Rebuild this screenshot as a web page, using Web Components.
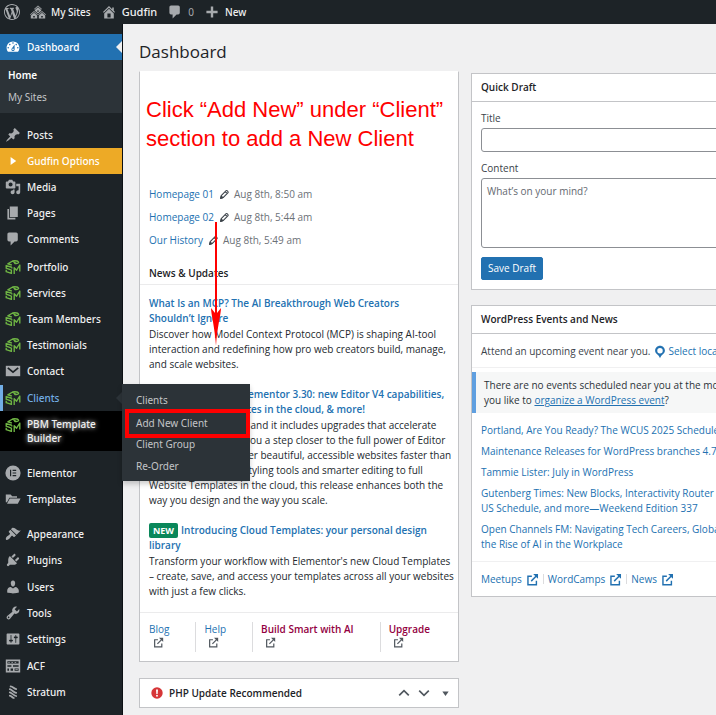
<!DOCTYPE html>
<html lang="en">
<head>
<meta charset="utf-8">
<title>Dashboard</title>
<style>
html,body{margin:0;height:100%}
body{background:#f0f0f1;font:10px/15px "Open Sans","Noto Sans",sans-serif;color:#3c434a;overflow:hidden}
</style>
</head>
<body>
<admin-app></admin-app>
<script>
const P = d => `<path d="${d}"/>`;
const ICONS = {
 wordpress: P("M20 10c0-5.51-4.49-10-10-10C4.48 0 0 4.49 0 10c0 5.52 4.48 10 10 10 5.51 0 10-4.48 10-10zM7.78 15.37L4.37 6.22c.55-.02 1.17-.08 1.17-.08.5-.06.44-1.13-.06-1.11 0 0-1.45.11-2.37.11-.18 0-.37 0-.58-.01C4.12 2.69 6.87 1.11 10 1.11c2.33 0 4.45.87 6.05 2.34-.68-.11-1.65.39-1.65 1.58 0 .74.45 1.36.9 2.1.35.61.55 1.36.55 2.46 0 1.49-1.4 5-1.4 5l-3.03-8.37c.54-.02.82-.17.82-.17.5-.05.44-1.25-.06-1.22 0 0-1.44.12-2.38.12-.87 0-2.33-.12-2.33-.12-.5-.03-.56 1.2-.06 1.22l.92.08 1.26 3.41zM17.41 10c.24-.64.74-1.87.43-4.25.7 1.29 1.05 2.71 1.05 4.25 0 3.29-1.73 6.24-4.4 7.78.97-2.59 1.94-5.2 2.92-7.78zM6.1 18.09C3.12 16.65 1.11 13.53 1.11 10c0-1.3.23-2.48.72-3.59C3.25 10.3 4.67 14.2 6.1 18.09zm4.03-6.63l2.58 6.98c-.86.29-1.76.45-2.71.45-.79 0-1.57-.11-2.29-.33.81-2.38 1.62-4.74 2.42-7.1z"),
 sites: P("M14.27 6.87L10 3.14 5.73 6.87 5 6.14l5-4.38 5 4.38zM14 8.42l-4.05 3.43L6 8.38v-.74l4-3.5 4 3.5v.78zM11 9.7V8H9v1.7h2zm-1.73 4.03L5 10 .73 13.73 0 13l5-4.38L10 13zm10 0L15 10l-4.27 3.73L10 13l5-4.38L20 13zM5 11l4 3.5V18H1v-3.5zm10 0l4 3.5V18h-8v-3.5zm-9 6v-2H4v2h2zm10 0v-2h-2v2h2z"),
 home: P("M16 8.5l1.53 1.53-1.06 1.06L10 4.6l-6.47 6.49-1.06-1.06L10 2.5l4 4v-2h2v4zm-6-2.46l6 5.99V18H4v-5.97zM12 17v-5H8v5h4z"),
 comment: P("M5 2h9c1.1 0 2 .9 2 2v7c0 1.1-.9 2-2 2h-2l-5 5v-5H5c-1.1 0-2-.9-2-2V4c0-1.1.9-2 2-2z"),
 plus: P("M17 8.5v3h-5.500v5.500h-3v-5.500H3v-3h5.500V3h3v5.500z"),
 dashboard: P("M3.76 16h12.48c1.1-1.37 1.76-3.11 1.76-5 0-4.42-3.58-8-8-8s-8 3.58-8 8c0 1.89.66 3.63 1.76 5zM10 4c.55 0 1 .45 1 1s-.45 1-1 1-1-.45-1-1 .45-1 1-1zM6 6c.55 0 1 .45 1 1s-.45 1-1 1-1-.45-1-1 .45-1 1-1zm8 0c.55 0 1 .45 1 1s-.45 1-1 1-1-.45-1-1 .45-1 1-1zm-5.370 5.550L12 7v6c0 1.100-.9 2-2 2s-2-.9-2-2c0-.57.24-1.080.63-1.450zM4 10c.55 0 1 .45 1 1s-.45 1-1 1-1-.45-1-1 .45-1 1-1zm12 0c.55 0 1 .45 1 1s-.45 1-1 1-1-.45-1-1 .45-1 1-1zm-5 3c0-.55-.45-1-1-1s-1 .45-1 1 .45 1 1 1 1-.45 1-1z"),
 pin: P("M10.44 3.02l1.82-1.82 6.36 6.35-1.83 1.82c-1.05-.68-2.48-.57-3.41.36l-.75.75c-.92.93-1.04 2.35-.35 3.41l-1.83 1.82-2.41-2.41-2.8 2.79c-.42.42-3.38 2.71-3.8 2.29s1.86-3.39 2.28-3.81l2.79-2.79L4.1 9.36l1.83-1.82c1.05.69 2.48.57 3.4-.36l.75-.75c.93-.92 1.05-2.35.36-3.41z"),
 play: P("M7 5l7 5-7 5z"),
 media: P("M13 11V4c0-.55-.45-1-1-1h-1.67L9 1H5L3.67 3H2c-.55 0-1 .45-1 1v7c0 .55.45 1 1 1h10c.55 0 1-.45 1-1zM7 4.500c1.380 0 2.500 1.120 2.500 2.500S8.380 9.500 7 9.500 4.500 8.380 4.500 7 5.620 4.500 7 4.500zM14 6h5v10.500c0 1.380-1.120 2.500-2.500 2.500S14 17.880 14 16.500s1.120-2.500 2.500-2.500c.17 0 .34.02.5.05V9h-3V6zm-4 8.050V13h2v3.500c0 1.380-1.120 2.500-2.500 2.500S7 17.880 7 16.500 8.120 14 9.500 14c.17 0 .34.02.5.05z"),
 page: P("M6 15V2h10v13H6zm-1 1h8v2H3V5h2v11z"),
 sbm: `<g fill="none" stroke="#6fb544" stroke-width="1.700" stroke-linejoin="round"><path d="M8.500 7.500L3.500 6l6-3.500c3.500-.8 8 .2 7.500 2-.5 1.200-3 1.300-5.500.9M9.500 2.500l4 3"/><path d="M8.500 10.300L1.500 8.200v3.300l6.500 2.300v4.200L1.500 15.800v-2.300M8.500 10.300v1.700"/><path d="M11.500 18.800v-8l3 3.200 4-6.500v8"/></g>`,
 mail: `<path d="M1 3.500h18v13H1z"/><path d="M3.500 6L10 11.500 16.500 6" fill="none" stroke="#1d2327" stroke-width="2.200"/>`,
 elementor: `<circle cx="10" cy="10" r="9.500"/><path d="M7 6v8M9.500 6.700H14M9.500 10H14M9.500 13.300H14" stroke="#1d2327" stroke-width="1.500"/>`,
 folder: P("M1 4.500h6l2 2h6v2H5.500L2.500 14H1zM6 9.500h13.500l-3.500 6.500H2.500z"),
 appearance: P("M14.48 11.06L7.41 3.99l1.5-1.5c.5-.56 2.3-.47 3.51.32 1.21.8 1.43 1.28 2.91 2.1 1.18.64 2.45 1.26 4.45.85zm-.71.71L6.7 4.7 4.93 6.47c-.39.39-.39 1.02 0 1.41l1.06 1.06c.39.39.39 1.03 0 1.42-.6.6-1.43 1.11-2.21 1.69-.35.26-.7.53-1.01.84C1.43 14.23.4 16.08 1.4 17.07c.99 1 2.84-.03 4.18-1.36.31-.31.58-.66.85-1.02.57-.78 1.08-1.61 1.69-2.21.39-.39 1.02-.39 1.41 0l1.06 1.06c.39.39 1.02.39 1.41 0z"),
 plugin: P("M13.11 4.36L9.87 7.6 8 5.73l3.24-3.24c.35-.34 1.05-.2 1.56.32.52.51.66 1.21.31 1.55zm-8 1.77l.91-1.12 9.01 9.01-1.19.84c-.71.71-2.63 1.16-3.82 1.16H6.14L4.9 17.26c-.59.59-1.54.59-2.12 0-.59-.58-.59-1.53 0-2.12l1.24-1.24v-3.88c0-1.13.4-3.19 1.09-3.89zm7.26 3.97l3.24-3.24c.34-.35 1.04-.21 1.55.31.52.51.66 1.21.31 1.55l-3.24 3.25z"),
 user: P("M10 9.25c-2.27 0-2.73-3.44-2.73-3.44C7 4.02 7.82 2 9.97 2c2.16 0 2.98 2.02 2.71 3.81 0 0-.41 3.44-2.68 3.44zm0 2.57L12.72 10c2.39 0 4.52 2.33 4.52 4.53v2.49s-3.65 1.13-7.24 1.13c-3.65 0-7.24-1.13-7.24-1.13v-2.49c0-2.25 1.94-4.48 4.47-4.48z"),
 tool: P("M16.68 9.77c-1.34 1.34-3.3 1.67-4.95.99l-5.41 6.52c-.99.99-2.59.99-3.58 0s-.99-2.59 0-3.57l6.52-5.42c-.68-1.65-.35-3.61.99-4.95 1.28-1.28 3.12-1.62 4.72-1.06l-2.89 2.89 2.82 2.82 2.86-2.87c.53 1.58.18 3.39-1.08 4.65zM3.81 16.21c.4.39 1.04.39 1.43 0 .4-.4.4-1.04 0-1.43-.39-.4-1.03-.4-1.43 0-.39.39-.39 1.03 0 1.43z"),
 settings: P("M18 16V4c0-.55-.45-1-1-1H3c-.55 0-1 .45-1 1v12c0 .55.45 1 1 1h14c.55 0 1-.45 1-1zM8 11h1c.55 0 1 .45 1 1s-.45 1-1 1H8v1.500c0 .28-.22.5-.5.5s-.5-.22-.5-.5V13H6c-.55 0-1-.45-1-1s.45-1 1-1h1V5.500c0-.28.22-.5.5-.5s.5.22.5.5V11zm5-2h-1c-.55 0-1-.45-1-1s.45-1 1-1h1V5.500c0-.28.22-.5.5-.5s.5.22.5.5V7h1c.55 0 1 .45 1 1s-.45 1-1 1h-1v5.500c0 .28-.22.5-.5.5s-.5-.22-.5-.5V9z"),
 acf: `<path fill-rule="evenodd" d="M1 2h18v16H1zM3 4v3h14V4zM3 9v2h5V9zM10 9v2h7V9zM3 13v3h2v-3zM7 13v3h3v-3zM12 13v3h5v-3z"/><path d="M4 5h2v1H4zM8 5h2v1H8zM12 5h2v1h-2zM13 14h3v1h-3z"/>`,
 stratum: `<path d="M7 3c3 0 4 3 7 3.500M6 6.500c3 1 5 4 8 4.500M6 10.500c3 1 5 4 8 4.500M6 14.500c2 .5 3 2.500 5 3" fill="none" stroke="currentColor" stroke-width="2.200" stroke-linecap="round"/>`,
 pencil: `<g fill="none" stroke="currentColor" stroke-width="2" stroke-linejoin="round"><path d="M3 17l1-5 9-9c1.500-1 4.500 2 3.500 3.500l-9 9zM11.500 5l3.500 3.500"/><path d="M3 17l1.300-4 2.700 2.800z" fill="currentColor"/></g>`,
 external: `<g fill="none" stroke="currentColor" stroke-width="2.200"><path d="M9 5H3v13h13v-6"/><path d="M8 12.500l9-9"/></g><path d="M11 1.500h7.500V9l-2.500-2.500-3-3z"/>`,
 location: `<path fill-rule="evenodd" d="M10 1C6 1 3 4.200 3 8c0 2.500 1.400 4 2.800 5.200C7.500 14.600 9.500 17 10 19c.5-2 2.500-4.400 4.200-5.800C15.600 12 17 10.500 17 8c0-3.800-3-7-7-7zm0 3.200a3.900 3.900 0 1 1 0 7.800 3.900 3.900 0 0 1 0-7.800z"/>`,
 alert: `<circle cx="10" cy="10" r="9.500" fill="#d63638"/><path d="M8.400 4h3.200l-.5 7.500H8.900z" fill="#fff"/><circle cx="10" cy="14.500" r="1.600" fill="#fff"/>`,
 up: `<path d="M2 14l8-8 8 8" fill="none" stroke="currentColor" stroke-width="2.800"/>`,
 down: `<path d="M2 6l8 8 8-8" fill="none" stroke="currentColor" stroke-width="2.800"/>`,
 toggle: P("M1 4h18l-9 13z")
};
const define = (name, css, html) => customElements.define(name, class extends HTMLElement {
  constructor(){
    super();
    this.attachShadow({mode:'open'}).innerHTML = `<style>*{box-sizing:border-box}a{text-decoration:none;color:inherit}${css}</style>` + (typeof html === 'function' ? html(this) : html);
  }
});
const attr = (el, n) => el.getAttribute(n) || '';

define('wp-icon', `:host{display:inline-block;flex:none;width:16px;height:16px}svg{display:block;width:100%;height:100%}`,
  el => `<svg viewBox="0 0 20 20" fill="currentColor" aria-hidden="true">${ICONS[attr(el,'name')]}</svg>`);

define('admin-bar', `
:host{display:block;background:#1d2327;color:#f0f0f1;font:500 10px/24px "Noto Sans","Open Sans",sans-serif}
nav{display:flex;height:24px;padding-left:4px;gap:10px}
a{display:flex;align-items:center;gap:5px}
.site{font-size:11px}
.count{color:#a7aaad;font-weight:400}
wp-icon{color:#a7aaad}`,
`<nav aria-label="Toolbar">
<a href="#" aria-label="About WordPress"><wp-icon name="wordpress"></wp-icon></a>
<a href="#"><wp-icon name="sites"></wp-icon>My Sites</a>
<a href="#" class="site"><wp-icon name="home"></wp-icon>Gudfin</a>
<a href="#" class="count"><wp-icon name="comment"></wp-icon>0</a>
<a href="#"><wp-icon name="plus"></wp-icon>New</a>
</nav>`);

define('nav-item', `
:host{display:block;position:relative;color:#f0f0f1;font-weight:500}
a{display:flex;align-items:center;min-height:26px;padding-left:5px;gap:6px;color:inherit}
wp-icon{color:#a7aaad}
:host([state=current]){background:#2271b1;color:#fff}
:host([state=promo]){background:#edaa26;color:#fff}
:host([state=current]) wp-icon,:host([state=promo]) wp-icon{color:#fff}
:host([state=open]){color:#72aee6;box-shadow:inset 3px 0 #72aee6}
:host([state=boxed]){background:#000}
:host([state=boxed]) a{align-items:flex-start;padding-top:6px;padding-bottom:6px;line-height:14px;text-shadow:0 0 5px #fff}
:host([state=current])::after,:host([state=open])::after{content:"";position:absolute;right:0;top:50%;margin-top:-6px;border:6px solid transparent;border-left:0;border-right-color:#f0f0f1}
:host([state=open])::after{border-right-color:#2c3338}`,
el => `<a href="#"><wp-icon name="${attr(el,'icon')}"></wp-icon><span><slot></slot></span></a><slot name="flyout"></slot>`);

define('fly-out', `
:host{position:absolute;left:100%;top:-1px;z-index:5;width:128px;padding:5px 0 4px;background:#2c3338;color:#c3c4c7;box-shadow:0 3px 5px rgba(0,0,0,.2);font-weight:400}
a{display:block;padding:0 14px;line-height:22px}
a.marked{margin:-2px 0 -5px 3px;padding:0 7px;border:4px solid #f00;line-height:21px}`,
`<a href="#">Clients</a><a href="#" class="marked">Add New Client</a><a href="#">Client Group</a><a href="#">Re-Order</a>`);

define('side-nav', `
:host{display:block;width:123px;padding-top:10px;background:#1d2327;font:10px/15px "Noto Sans","Open Sans",sans-serif;position:relative;z-index:4;border-right:1px solid #0c1014}
.sub{background:#2c3338;padding:4px 8px 5px;margin-bottom:9px;color:#c3c4c7}
.sub a{display:block;line-height:22px}.sub .on{color:#fff;font-weight:600}
.group{margin-bottom:1px}.first{margin-bottom:2px}.wide{margin-bottom:9px}`,
`<nav aria-label="Main menu">
<nav-item icon="dashboard" state="current">Dashboard</nav-item>
<div class="sub"><a href="#" class="on">Home</a><a href="#">My Sites</a></div>
<div class="first"><nav-item icon="pin">Posts</nav-item><nav-item icon="play" state="promo">Gudfin Options</nav-item><nav-item icon="media">Media</nav-item><nav-item icon="page">Pages</nav-item><nav-item icon="comment">Comments</nav-item></div>
<div class="group"><nav-item icon="sbm">Portfolio</nav-item><nav-item icon="sbm">Services</nav-item><nav-item icon="sbm">Team Members</nav-item><nav-item icon="sbm">Testimonials</nav-item><nav-item icon="mail">Contact</nav-item></div>
<div class="wide"><nav-item icon="sbm" state="open">Clients<fly-out slot="flyout"></fly-out></nav-item><nav-item icon="sbm" state="boxed">PBM Template Builder</nav-item></div>
<div class="wide"><nav-item icon="elementor">Elementor</nav-item><nav-item icon="folder">Templates</nav-item></div>
<div class="group"><nav-item icon="appearance">Appearance</nav-item><nav-item icon="plugin">Plugins</nav-item></div>
<div class="group"><nav-item icon="user">Users</nav-item><nav-item icon="tool">Tools</nav-item><nav-item icon="settings">Settings</nav-item></div>
<nav-item icon="acf">ACF</nav-item><nav-item icon="stratum">Stratum</nav-item>
</nav>`);

define('dash-card', `
:host{display:block;background:#fff;border:1px solid #c3c4c7}
h2{display:flex;align-items:center;margin:0;padding:0 9px;height:28px;font-size:10px;font-weight:600;color:#1d2327;border-bottom:1px solid #c3c4c7}`,
el => `<h2>${attr(el,'heading')}</h2><slot></slot>`);

define('activity-row', `
:host{display:flex;align-items:center;height:23px;color:#6c7177}
a{color:#2271b1}wp-icon{width:11px;height:11px;margin:0 4px 0 5px;color:#3c434a}`,
el => `<a href="#">${attr(el,'label')}</a><wp-icon name="pencil"></wp-icon><span><slot></slot></span>`);

define('news-post', `
:host{display:block;margin-bottom:15px;white-space:nowrap}
:host(:last-child){margin-bottom:13px}
a{display:block;margin-bottom:1px;color:#2271b1;font-weight:600}
p{margin:0;color:#23282d}
.new{display:inline-block;background:#0a875a;color:#fff;border-radius:2px;padding:0 4px;margin-right:3px;font-size:9px;font-weight:700;line-height:15px;vertical-align:top}`,
el => `<a href="#">${el.hasAttribute('new')?'<span class="new">NEW</span>':''}<slot name="title"></slot></a><p><slot></slot></p>`);

define('overview-card', `
:host{display:block;position:relative;background:#fff;border:1px solid #c3c4c7;border-top-color:#fff}
.note{margin:0;padding:23px 6px 30px;font:22px/29px "Liberation Sans",Arial,sans-serif;color:#f00}
.rows{padding:0 9px}
h3{margin:10px 0 11px;padding:0 9px;font-size:10px;line-height:22px;font-weight:600;color:#1d2327;border-bottom:1px solid #ebebec}
.posts{padding:0 9px}
footer{display:flex;gap:8px;padding:9px;border-top:1px solid #ebebec}
footer a{padding-right:26px;border-right:1px solid #dcdcde;color:#2271b1;height:30px;white-space:nowrap}
footer a:last-child{border:0;padding:0}
footer .hot{color:#93003f;font-weight:600}
footer wp-icon{display:block;width:11px;height:11px;margin-left:4px;color:#50575e}
.arrow{position:absolute;left:70px;top:150px;width:12px;height:124px}`,
`<p class="note">Click “Add New” under “Client”<br>section to add a New Client</p>
<div class="rows"><activity-row label="Homepage 01">Aug 8th, 8:50 am</activity-row><activity-row label="Homepage 02">Aug 8th, 5:44 am</activity-row><activity-row label="Our History">Aug 8th, 5:49 am</activity-row></div>
<h3>News &amp; Updates</h3>
<div class="posts">
<news-post><span slot="title">What Is an MCP? The AI Breakthrough Web Creators<br>Shouldn’t Ignore</span>Discover how Model Context Protocol (MCP) is shaping AI-tool<br>interaction and redefining how pro web creators build, manage,<br>and scale websites.</news-post>
<news-post new><span slot="title">Introducing Elementor 3.30: new Editor V4 capabilities,<br>and Website Templates in the cloud, &amp; more!</span>Elementor 3.30 is out and it includes upgrades that accelerate<br>your workflow bring you a step closer to the full power of Editor<br>V4 and help you deliver beautiful, accessible websites faster than<br>ever. From new CSS styling tools and smarter editing to full<br>Website Templates in the cloud, this release enhances both the<br>way you design and the way you scale.</news-post>
<news-post new><span slot="title">Introducing Cloud Templates: your personal design<br>library</span>Transform your workflow with Elementor's new Cloud Templates<br>– create, save, and access your templates across all your websites<br>with just a few clicks.</news-post>
</div>
<footer><a href="#">Blog<wp-icon name="external"></wp-icon></a><a href="#">Help<wp-icon name="external"></wp-icon></a><a href="#" class="hot">Build Smart with AI<wp-icon name="external"></wp-icon></a><a href="#" class="hot">Upgrade<wp-icon name="external"></wp-icon></a></footer>
<svg class="arrow" viewBox="0 0 12 124" aria-hidden="true"><path d="M5 0h2v91l4-5c0 6-4 20-5 38C5 106 1 92 1 86l4 5z" fill="#f00"/></svg>`);

define('update-bar', `
:host{display:flex;align-items:center;height:30px;padding:0 5px 0 11px;background:#fff;border:1px solid #c3c4c7;color:#1d2327}
h2{flex:1;margin:0 0 0 6px;font-size:10px;font-weight:600}
wp-icon{display:block;width:12px;height:12px}
button{all:unset;padding:0 4px;color:#50575e}
button:last-child{margin-left:4px}button:last-child wp-icon{width:7px;height:7px}`,
`<wp-icon name="alert"></wp-icon><h2>PHP Update Recommended</h2><button aria-label="Move up"><wp-icon name="up"></wp-icon></button><button aria-label="Move down"><wp-icon name="down"></wp-icon></button><button aria-label="Toggle panel"><wp-icon name="toggle"></wp-icon></button>`);

define('quick-draft', `
:host{display:block;padding:9px}
label{display:block}
input,textarea{display:block;width:100%;border:1px solid #8c8f94;border-radius:3px;background:#fff;font:inherit;color:#2c3338;padding:5px;resize:none}
input{height:24px;margin:2px 0 9px}
textarea{height:70px;margin:2px 0 9px}
textarea::placeholder{color:#646970;opacity:1}
button{display:block;height:23px;padding:0 6px;background:#2271b1;border:1px solid #2271b1;border-radius:2px;color:#fff;font:inherit}`,
`<form><label for="t">Title</label><input id="t" type="text"><label for="c">Content</label><textarea id="c" placeholder="What’s on your mind?"></textarea><button type="button">Save Draft</button></form>`);

define('event-news', `
:host{display:block;white-space:nowrap}
a{color:#2271b1}
.near{display:flex;align-items:center;height:34px;padding:2px 9px 0;border-bottom:1px solid #f0f0f1}
.near wp-icon{width:14px;height:14px;color:#2271b1;margin:0 2px}
.notice{margin:4px 0 10px;padding:6px 8px 5px;border-left:4px solid #5f9fe0;background:#f6f7f7;color:#2c3338}
.notice a{text-decoration:underline}
ul{margin:0;padding:0 9px;list-style:none}
li{margin-bottom:6px}
footer{display:flex;align-items:center;height:35px;margin-top:9px;padding:0 9px;border-top:1px solid #f0f0f1}
footer a{display:flex;align-items:center;gap:4px}
footer a+a{margin-left:4px}
footer a+a::before{content:"";width:1px;height:10px;background:#dcdcde}
footer wp-icon{width:13px;height:13px}`,
`<div class="near">Attend an upcoming event near you.<wp-icon name="location"></wp-icon><a href="#">Select location</a></div>
<div class="notice">There are no events scheduled near you at the moment. Would<br>you like to <a href="#">organize a WordPress event</a>?</div>
<ul><li><a href="#">Portland, Are You Ready? The WCUS 2025 Schedule Has Landed</a></li><li><a href="#">Maintenance Releases for WordPress branches 4.7 to 6.7</a></li><li><a href="#">Tammie Lister: July in WordPress</a></li><li><a href="#">Gutenberg Times: New Blocks, Interactivity Router API, WordCamp<br>US Schedule, and more—Weekend Edition 337</a></li><li><a href="#">Open Channels FM: Navigating Tech Careers, Global Meetups, and<br>the Rise of AI in the Workplace</a></li></ul>
<footer><a href="#">Meetups<wp-icon name="external"></wp-icon></a><a href="#">WordCamps<wp-icon name="external"></wp-icon></a><a href="#">News<wp-icon name="external"></wp-icon></a></footer>`);

define('admin-app', `
:host{display:grid;grid-template:auto 1fr/auto minmax(0,1fr);height:100vh;overflow:hidden}
admin-bar{grid-column:1/-1}
main{padding:15px 12px 0 16px;overflow:hidden}
h1{margin:0 0 7px;font-size:17px;line-height:25px;font-weight:400;color:#1d2327}
.cols{display:grid;grid-template-columns:repeat(2,minmax(320px,1fr));gap:12px;align-items:start}
.col{display:grid;grid-template-columns:minmax(0,1fr);gap:16px;min-width:0}
.second{margin-top:2px;gap:15px}`,
`<admin-bar></admin-bar><side-nav></side-nav>
<main><h1>Dashboard</h1><div class="cols">
<div class="col"><overview-card></overview-card><update-bar></update-bar></div>
<div class="col second"><dash-card heading="Quick Draft"><quick-draft></quick-draft></dash-card><dash-card heading="WordPress Events and News"><event-news></event-news></dash-card></div>
</div></main>`);
</script>
</body>
</html>
